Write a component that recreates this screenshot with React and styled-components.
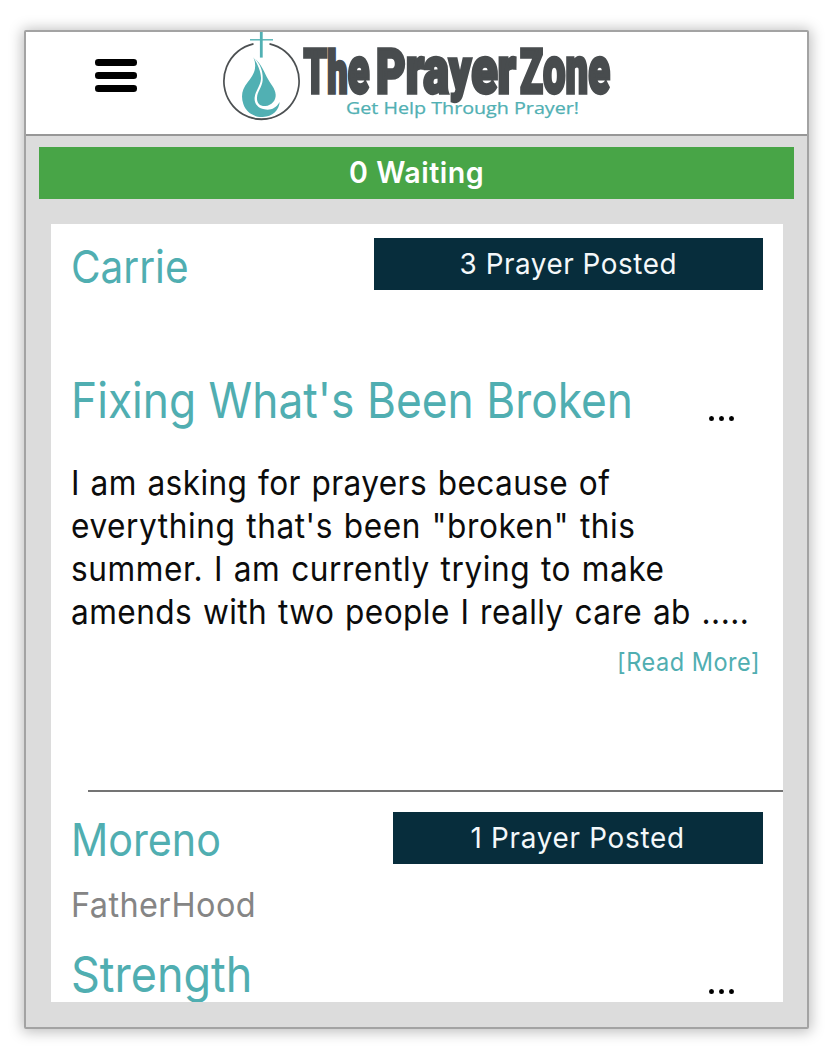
import React from "react";
import styled, { createGlobalStyle } from "styled-components";

const teal = "#50aeb1";

const GlobalStyle = createGlobalStyle`
  * { box-sizing: border-box; }
  body { margin: 0; background: #fff; font-family: Inter, "Liberation Sans", sans-serif; }
`;

const Page = styled.div`
  height: 1049px;
  padding: 30px 19px 20px 24px;
  overflow: hidden;
`;

const Phone = styled.main`
  height: 999px;
  display: flex;
  flex-direction: column;
  background: #dcdcdc;
  border: 2px solid #a3a3a3;
  border-radius: 2px;
  box-shadow: 0 1px 14px 2px rgba(0, 0, 0, 0.26);
`;

const Header = styled.header`
  height: 104px;
  flex: none;
  display: flex;
  align-items: flex-start;
  background: #fff;
  border-bottom: 2px solid #979797;
`;

const MenuButton = styled.button`
  display: flex;
  flex-direction: column;
  gap: 6.6px;
  width: 42px;
  margin: 27px 0 0 69px;
  padding: 0;
  border: 0;
  background: none;
`;

const MenuBar = styled.span`
  height: 6.6px;
  border-radius: 3.3px;
  background: #000;
`;

const Logo = styled.svg`
  display: block;
  flex: none;
  margin-left: 83px;
`;

const Waiting = styled.div`
  flex: none;
  height: 52px;
  margin: 11px 13px 0 13px;
  display: flex;
  align-items: center;
  justify-content: center;
  background: #48a547;
  color: #fff;
`;

const Card = styled.section`
  flex: none;
  height: 778px;
  margin: 25px 24px 0 25px;
  overflow: hidden;
  background: #fff;
`;

const Post = styled.article`
  padding: ${(p) => p.$top}px 20px 0;
`;

const Row = styled.div`
  display: flex;
  justify-content: space-between;
  align-items: center;
  height: ${(p) => p.$h}px;
  margin-top: ${(p) => p.$mt || 0}px;
`;

const Badge = styled.div`
  width: ${(p) => p.$w}px;
  height: 52px;
  padding-top: 1px;
  display: flex;
  align-items: center;
  justify-content: center;
  background: #072d3c;
  color: #f4f8fa;
`;

const Text = styled.span`
  display: block;
  white-space: nowrap;
  padding-top: ${(p) => p.$drop || 0}px;
  font-size: ${(p) => p.$size}px;
  line-height: ${(p) => p.$lh || p.$size * 1.2}px;
  font-weight: ${(p) => p.$weight || 400};
  letter-spacing: ${(p) => p.$ls || 0}px;
  word-spacing: ${(p) => p.$ws || 0}px;
  color: ${(p) => p.$color || "inherit"};
  transform: scaleX(${(p) => p.$sx || 1});
  transform-origin: ${(p) => p.$origin || "left"} center;
`;

const Body = styled.div`
  margin-top: 29.5px;
  color: #0c0c0c;
`;

const ReadMore = styled.a`
  display: flex;
  justify-content: flex-end;
  margin: 13.5px 3px 0 0;
  color: ${teal};
`;

const Dots = styled.button`
  display: flex;
  gap: 5.4px;
  margin: 35px 29px 0 0;
  padding: 0;
  border: 0;
  background: none;
`;

const Dot = styled.i`
  width: 4.8px;
  height: 5px;
  border-radius: 50%;
  background: #000;
`;

const Divider = styled.hr`
  height: 2px;
  margin: 113px 0 0 37px;
  border: 0;
  background: #747474;
`;

const More = () => (
  <Dots aria-label="More">
    <Dot /><Dot /><Dot />
  </Dots>
);

const lines = [
  ["I am asking for prayers because of", 0.42],
  ["everything that's been \"broken\" this", 0.6],
  ["summer. I am currently trying to make", 0.59],
  ["amends with two people I really care ab .....", 0.46],
];

function PrayerZoneLogo() {
  return (
    <Logo width="395" height="94" viewBox="220 32 395 94">
      <path d="M253.5 43.8 A37.6 38.2 0 1 0 269.5 43.8" fill="none" stroke="#4c5052" strokeWidth="1.7" />
      <path d="M248 117 Q261.5 123 275 117 Q261.5 120 248 117Z" fill="#4c5052" />
      <path d="M261.3 32V57.6" stroke="#51b0b3" strokeWidth="2.8" />
      <path d="M250 39.8H273" stroke="#51b0b3" strokeWidth="1.4" />
      <g transform="translate(210 25) scale(.33333)" fill="#51b0b3">
        <path d="M130 97C143 127 132 149 113 172C96 193 92 213 100 237C108 262 133 277 158 276C188 275 207 255 209 231C198 250 181 257 163 253C143 249 132 235 134 217C136 198 151 184 153 162C154 139 142 116 130 97Z" />
        <path d="M135 101C157 124 159 148 158 166C156 187 142 199 141 218C140 235 151 244 166 243C185 241 198 226 197 209C196 189 181 177 170 155C160 135 153 117 135 101Z" />
      </g>
      <g fill="#484c4e" stroke="#484c4e" strokeWidth="3.4" fontFamily="Roboto, sans-serif" fontWeight="900">
        <text x="303.5" y="93.2" fontSize="62" textLength="66" lengthAdjust="spacingAndGlyphs">T<tspan fontSize="60">h</tspan><tspan fontSize="66">e</tspan></text>
        <text x="376" y="93.2" fontSize="62" textLength="140" lengthAdjust="spacingAndGlyphs">P<tspan fontSize="66">ra</tspan><tspan fontSize="58" dy="-4">y</tspan><tspan fontSize="66" dy="4">er</tspan></text>
        <text x="520" y="93.2" fontSize="62" textLength="90" lengthAdjust="spacingAndGlyphs">Z<tspan fontSize="66">one</tspan></text>
      </g>
      <text x="346" y="113.8" fontSize="16.3" textLength="233" lengthAdjust="spacingAndGlyphs" fontFamily="Open Sans, sans-serif" fontWeight="500" fill="#51b0b3" stroke="#51b0b3" strokeWidth=".25">
        Get Help Through Prayer!
      </text>
    </Logo>
  );
}

export default function App() {
  return (
    <>
      <GlobalStyle />
      <Page>
        <Phone>
          <Header>
            <MenuButton aria-label="Menu">
              <MenuBar /><MenuBar /><MenuBar />
            </MenuButton>
            <PrayerZoneLogo />
          </Header>
          <Waiting>
            <Text $size={29.5} $weight={600} $sx={0.97} $ls={0.5} $origin="center">0 Waiting</Text>
          </Waiting>
          <Card>
            <Post $top={14}>
              <Row $h={52}>
                <Text $size={45} $color={teal} $sx={0.9} $drop={5}>Carrie</Text>
                <Badge $w={389}>
                  <Text $size={29} $sx={0.96} $ls={0.57} $origin="center">3 Prayer Posted</Text>
                </Badge>
              </Row>
              <Row $h={60} $mt={81}>
                <Text $size={49.5} $color={teal} $sx={0.895}>Fixing What's Been Broken</Text>
                <More />
              </Row>
              <Body>
                {lines.map(([t, ls]) => (
                  <Text key={t} $size={34} $lh={43.2} $sx={0.93} $ls={ls} $ws={1.5}>{t}</Text>
                ))}
              </Body>
              <ReadMore>
                <Text $size={25} $sx={0.94} $ls={0.55} $origin="right">[Read More]</Text>
              </ReadMore>
            </Post>
            <Divider />
            <Post $top={20}>
              <Row $h={52}>
                <Text $size={45} $color={teal} $sx={0.916} $drop={5}>Moreno</Text>
                <Badge $w={370}>
                  <Text $size={29} $sx={0.96} $ls={0.75} $origin="center">1 Prayer Posted</Text>
                </Badge>
              </Row>
              <Row $h={42} $mt={20}>
                <Text $size={34.5} $color="#858585" $sx={0.94} $ls={0.45}>FatherHood</Text>
              </Row>
              <Row $h={60} $mt={18}>
                <Text $size={49.5} $color={teal} $sx={0.908} $drop={1}>Strength</Text>
                <More />
              </Row>
            </Post>
          </Card>
        </Phone>
      </Page>
    </>
  );
}
